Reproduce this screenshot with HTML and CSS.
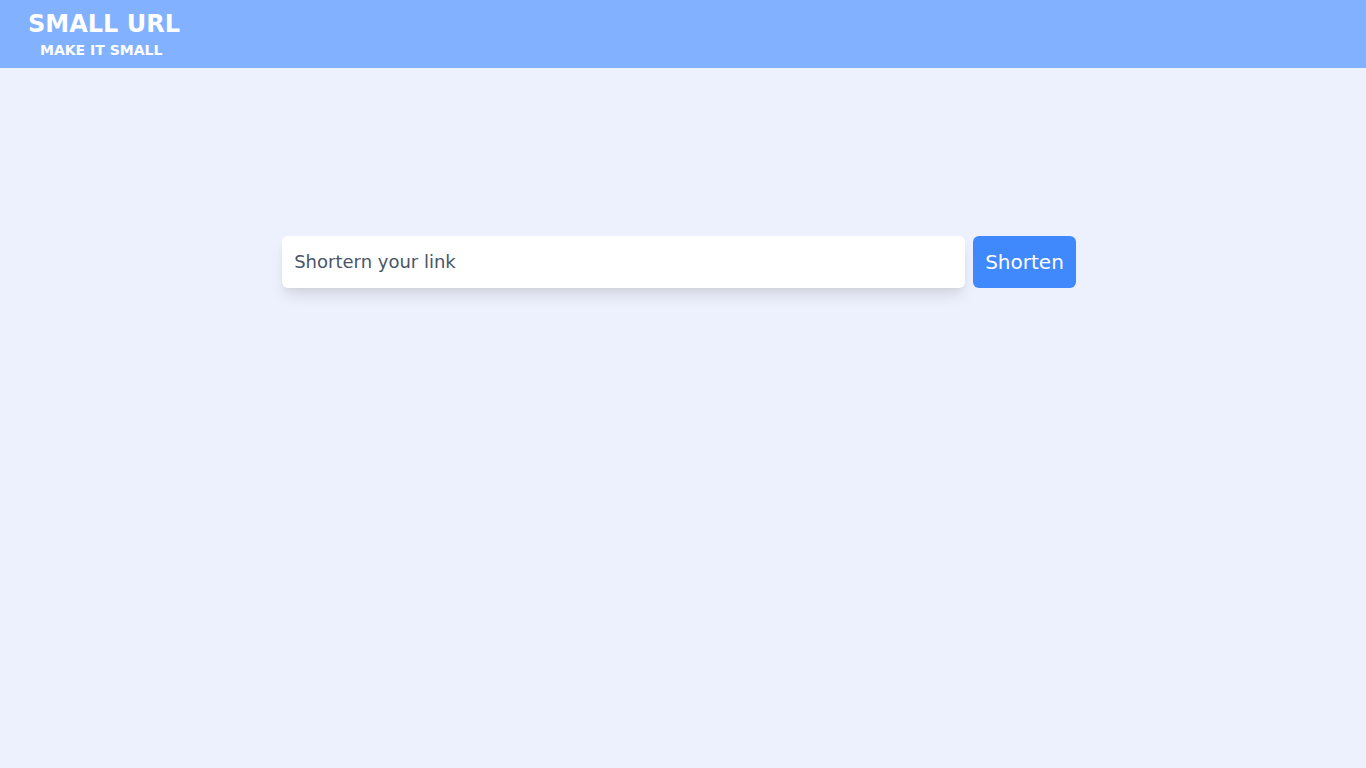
FILE: index.html
```html
<!DOCTYPE html>
<html>
<head>
<meta charset="utf-8">
<link rel="stylesheet" href="styles.css">
</head>
<body>
<header class="topbar">
  <div class="brand">
    <h1 class="brand-title">SMALL URL</h1>
    <p class="brand-sub">MAKE IT SMALL</p>
  </div>
</header>
<main class="main">
  <form class="shorten-form">
    <input class="link-input" type="text" placeholder="Shortern your link">
    <button class="shorten-btn" type="button">Shorten</button>
  </form>
</main>
</body>
</html>
```
FILE: styles.css
```css
* { box-sizing: border-box; }
html, body { margin: 0; padding: 0; }
body {
  font-family: "DejaVu Sans", sans-serif;
  background: #edf1fd;
  min-height: 100vh;
}
.topbar {
  background: #82b1ff;
  height: 68px;
  padding: 10px 28px 0;
}
.brand {
  display: flex;
  flex-direction: column;
  align-items: flex-start;
}
.brand-title {
  margin: 0;
  color: #fff;
  font-size: 24px;
  font-weight: bold;
  line-height: 28px;
}
.brand-sub {
  margin: 0 0 0 12px;
  color: #fff;
  font-size: 14px;
  font-weight: bold;
  line-height: 24px;
}
.main {
  padding-top: 168px;
  display: flex;
  justify-content: center;
  padding-right: 8px;
}
.shorten-form {
  display: flex;
  gap: 8px;
}
.link-input {
  width: 683px;
  height: 52px;
  border: none;
  border-radius: 6px;
  background: #fff;
  padding: 0 12px 2px;
  font-family: "DejaVu Sans", sans-serif;
  font-size: 18px;
  color: #4a5568;
  box-shadow: 0 10px 15px -3px rgba(0,0,0,0.1), 0 4px 6px -2px rgba(0,0,0,0.05);
  outline: none;
}
.link-input::placeholder { color: #4a5568; opacity: 1; }
.shorten-btn {
  height: 52px;
  border: none;
  border-radius: 6px;
  background: #4089fd;
  color: #fff;
  padding: 0 12px;
  font-family: "DejaVu Sans", sans-serif;
  font-size: 20px;
  cursor: pointer;
}
```
